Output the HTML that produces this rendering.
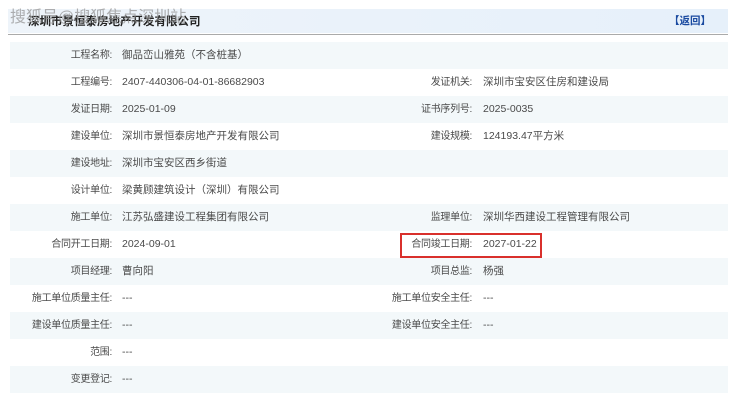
<!DOCTYPE html>
<html><head><meta charset="utf-8"><style>
body{margin:0;width:740px;height:404px;background:#fff;font-family:"Liberation Sans","Noto Sans CJK SC",sans-serif;position:relative;overflow:hidden;color:#4a4a4a;font-size:10.5px}
.hd{position:absolute;left:8px;top:9px;width:720px;height:24px;background:linear-gradient(90deg,#eef4fa,#e6f0fa)}
.hl{position:absolute;left:8px;top:34px;width:720px;height:1px;background:#aaa}
.t{position:absolute;left:28px;top:13px;font-weight:bold;font-size:11.5px;color:#222}
.wm{position:absolute;left:10px;top:3px;font-size:16px;color:rgba(150,150,150,.75)}
.bk{position:absolute;left:669px;top:13px;font-weight:bold;color:#1a4aa0;font-size:10.5px}
.r{position:absolute;left:10px;width:718px;height:27px;line-height:27px}
.s{background:#f3f8fa}
.l,.v,.l2,.v2{position:absolute;top:0;white-space:nowrap}
.l,.l2{font-size:10px;letter-spacing:-0.3px}
.l{right:616px}.v{left:112px}.l2{right:256px}.v2{left:473px}
.box{position:absolute;left:400px;top:233px;width:142px;height:25px;border:2px solid #d9302c;box-sizing:border-box}
</style></head><body>
<div class="hd"></div><div class="hl"></div>
<div class="t">深圳市景恒泰房地产开发有限公司</div>
<div class="wm">搜狐号@搜狐焦点深圳站</div>
<div class="bk">【返回】</div>
<div class="r s" style="top:42px"><span class="l">工程名称:</span><span class="v">御品峦山雅苑（不含桩基）</span></div>
<div class="r" style="top:69px"><span class="l">工程编号:</span><span class="v">2407-440306-04-01-86682903</span><span class="l2">发证机关:</span><span class="v2">深圳市宝安区住房和建设局</span></div>
<div class="r s" style="top:96px"><span class="l">发证日期:</span><span class="v">2025-01-09</span><span class="l2">证书序列号:</span><span class="v2">2025-0035</span></div>
<div class="r" style="top:123px"><span class="l">建设单位:</span><span class="v">深圳市景恒泰房地产开发有限公司</span><span class="l2">建设规模:</span><span class="v2">124193.47平方米</span></div>
<div class="r s" style="top:150px"><span class="l">建设地址:</span><span class="v">深圳市宝安区西乡街道</span></div>
<div class="r" style="top:177px"><span class="l">设计单位:</span><span class="v">梁黄顾建筑设计（深圳）有限公司</span></div>
<div class="r s" style="top:204px"><span class="l">施工单位:</span><span class="v">江苏弘盛建设工程集团有限公司</span><span class="l2">监理单位:</span><span class="v2">深圳华西建设工程管理有限公司</span></div>
<div class="r" style="top:231px"><span class="l">合同开工日期:</span><span class="v">2024-09-01</span><span class="l2">合同竣工日期:</span><span class="v2">2027-01-22</span></div>
<div class="r s" style="top:258px"><span class="l">项目经理:</span><span class="v">曹向阳</span><span class="l2">项目总监:</span><span class="v2">杨强</span></div>
<div class="r" style="top:285px"><span class="l">施工单位质量主任:</span><span class="v">---</span><span class="l2">施工单位安全主任:</span><span class="v2">---</span></div>
<div class="r s" style="top:312px"><span class="l">建设单位质量主任:</span><span class="v">---</span><span class="l2">建设单位安全主任:</span><span class="v2">---</span></div>
<div class="r" style="top:339px"><span class="l">范围:</span><span class="v">---</span></div>
<div class="r s" style="top:366px"><span class="l">变更登记:</span><span class="v">---</span></div>
<div class="box"></div>
</body></html>
